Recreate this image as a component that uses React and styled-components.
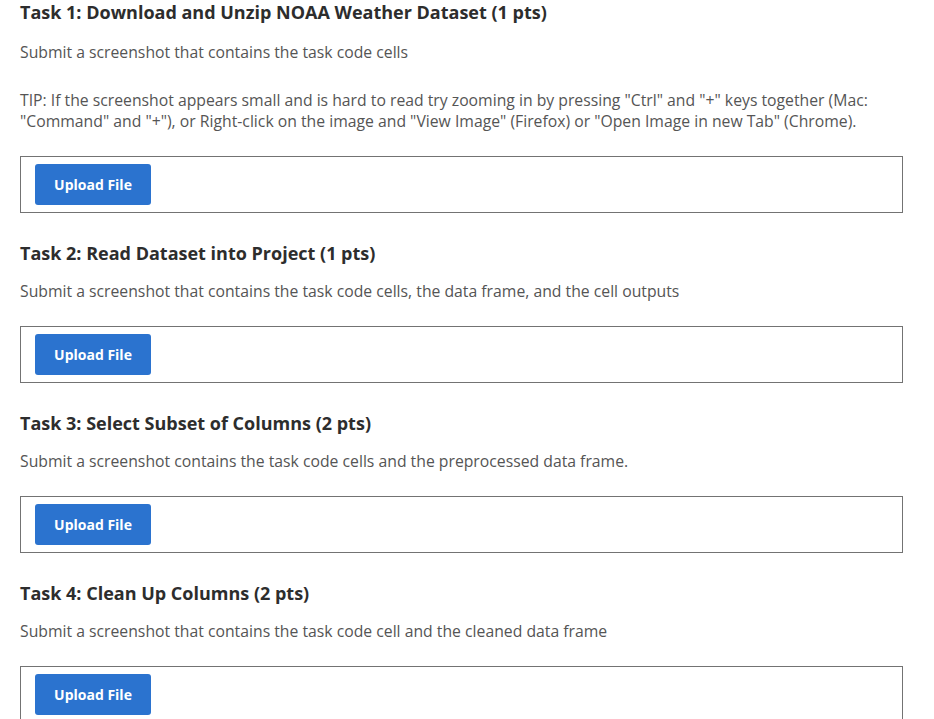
import React from "react";
import styled, { createGlobalStyle } from "styled-components";

const GlobalStyle = createGlobalStyle`
  body {
    margin: 0;
    background: #fff;
    font-family: "Open Sans", "Liberation Sans", sans-serif;
  }
`;

const Page = styled.main`
  display: flex;
  flex-direction: column;
  gap: 28px;
  padding: 0 31px 0 20px;
`;

const Task = styled.section`
  display: flex;
  flex-direction: column;

  &:first-child h2 {
    margin-bottom: 18px;
  }
`;

const Title = styled.h2`
  margin: 0 0 16px;
  font-size: 18px;
  line-height: 24px;
  font-weight: 700;
  color: #2d2d2d;
`;

const Text = styled.p`
  margin: 0 0 27px;
  font-size: 15.75px;
  line-height: 21px;
  color: #555;

  &:last-of-type {
    margin-bottom: 24px;
  }
`;

const UploadBox = styled.div`
  display: flex;
  align-items: center;
  padding: 7px 14px;
  border: 1px solid #737373;
`;

const UploadButton = styled.button`
  width: 116px;
  height: 41px;
  border: none;
  border-radius: 3px;
  background: #2b73cf;
  color: #fff;
  font-family: inherit;
  font-size: 14px;
  font-weight: 700;
  cursor: pointer;
`;

const tasks = [
  {
    title: "Task 1: Download and Unzip NOAA Weather Dataset (1 pts)",
    text: [
      "Submit a screenshot that contains the task code cells",
      'TIP: If the screenshot appears small and is hard to read try zooming in by pressing "Ctrl" and "+" keys together (Mac: "Command" and "+"), or Right-click on the image and "View Image" (Firefox) or "Open Image in new Tab" (Chrome).',
    ],
  },
  {
    title: "Task 2: Read Dataset into Project (1 pts)",
    text: ["Submit a screenshot that contains the task code cells, the data frame, and the cell outputs"],
  },
  {
    title: "Task 3: Select Subset of Columns (2 pts)",
    text: ["Submit a screenshot contains the task code cells and the preprocessed data frame."],
  },
  {
    title: "Task 4: Clean Up Columns (2 pts)",
    text: ["Submit a screenshot that contains the task code cell and the cleaned data frame"],
  },
];

export default function App() {
  return (
    <>
      <GlobalStyle />
      <Page>
        {tasks.map((task) => (
          <Task key={task.title}>
            <Title>{task.title}</Title>
            {task.text.map((t) => (
              <Text key={t}>{t}</Text>
            ))}
            <UploadBox>
              <UploadButton>Upload File</UploadButton>
            </UploadBox>
          </Task>
        ))}
      </Page>
    </>
  );
}
